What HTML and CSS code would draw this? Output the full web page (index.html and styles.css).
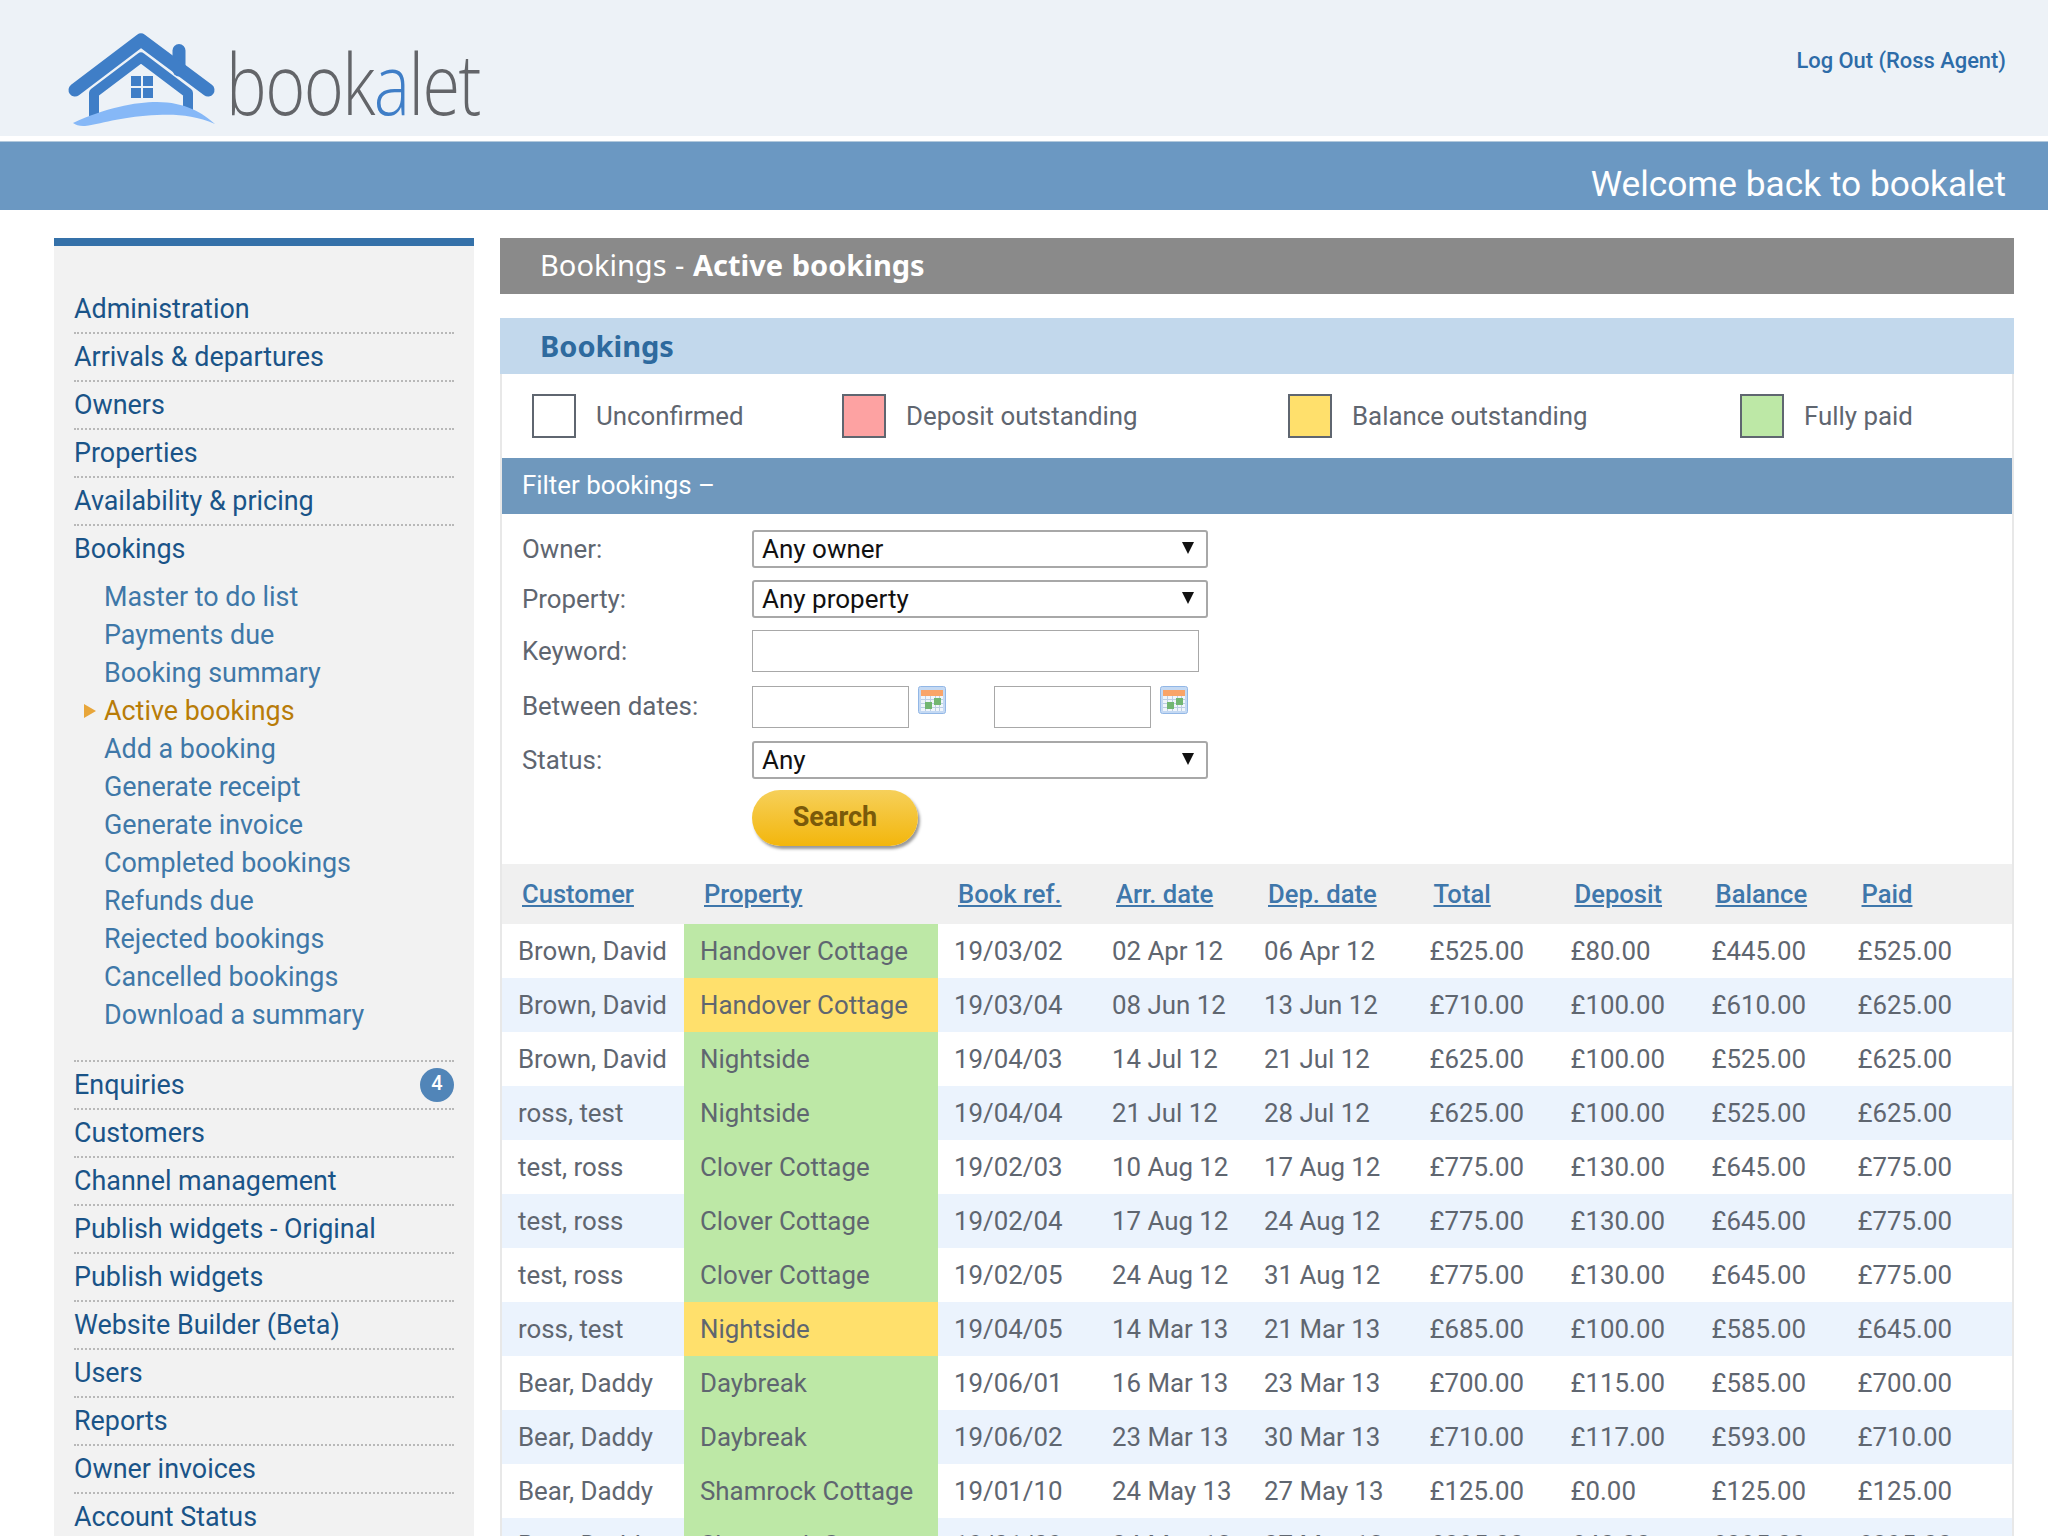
FILE: index.html
```html
<!DOCTYPE html>
<html lang="en">
<head>
<meta charset="utf-8">
<title>bookalet</title>
<link rel="stylesheet" href="styles.css">
</head>
<body>
<header class="top">
  <a class="logo" href="#">
    <svg class="logo-mark" viewBox="60 20 170 115" width="170" height="115" aria-hidden="true">
      <path d="M179 50.5 V70" fill="none" stroke="#3f7ec7" stroke-width="13" stroke-linecap="round"/>
      <path d="M75 90 L141 40 L208 90" fill="none" stroke="#3f7ec7" stroke-width="13" stroke-linecap="round" stroke-linejoin="round"/>
      <path d="M94 120 V93 L141 57.5 L188 93 V113" fill="none" stroke="#3f7ec7" stroke-width="10" stroke-linejoin="round"/>
      <path d="M131 76h10v10h-10zM143 76h10v10h-10zM131 88h10v10h-10zM143 88h10v10h-10z" fill="#3f7ec7"/>
      <path d="M73 123 C105 108 135 102 157 102 C185 102 203 113 215 124 C195 115 175 114 157 115 C125 116 105 123 85 126 C80 126.500 76 125 73 123 Z" fill="#86b8f7"/>
    </svg>
    <span class="logo-text">book<span class="logo-a">a</span>let</span>
  </a>
  <a class="logout" href="#">Log Out (Ross Agent)</a>
</header>
<div class="welcome">Welcome back to bookalet</div>
<div class="layout">
  <nav class="side">
    <ul class="menu">
      <li><a href="#">Administration</a></li>
      <li><a href="#">Arrivals &amp; departures</a></li>
      <li><a href="#">Owners</a></li>
      <li><a href="#">Properties</a></li>
      <li><a href="#">Availability &amp; pricing</a></li>
      <li class="open"><a href="#">Bookings</a>
        <ul class="sub">
          <li><a href="#">Master to do list</a></li>
          <li><a href="#">Payments due</a></li>
          <li><a href="#">Booking summary</a></li>
          <li class="current"><a href="#">Active bookings</a></li>
          <li><a href="#">Add a booking</a></li>
          <li><a href="#">Generate receipt</a></li>
          <li><a href="#">Generate invoice</a></li>
          <li><a href="#">Completed bookings</a></li>
          <li><a href="#">Refunds due</a></li>
          <li><a href="#">Rejected bookings</a></li>
          <li><a href="#">Cancelled bookings</a></li>
          <li><a href="#">Download a summary</a></li>
        </ul>
      </li>
      <li><a href="#">Enquiries</a><span class="badge">4</span></li>
      <li><a href="#">Customers</a></li>
      <li><a href="#">Channel management</a></li>
      <li><a href="#">Publish widgets - Original</a></li>
      <li><a href="#">Publish widgets</a></li>
      <li><a href="#">Website Builder (Beta)</a></li>
      <li><a href="#">Users</a></li>
      <li><a href="#">Reports</a></li>
      <li><a href="#">Owner invoices</a></li>
      <li><a href="#">Account Status</a></li>
    </ul>
  </nav>
  <main class="main">
    <h1 class="title">Bookings - <strong>Active bookings</strong></h1>
    <section class="panel">
      <h2 class="panel-head">Bookings</h2>
      <div class="legend">
        <div class="key k1"><i class="swatch"></i>Unconfirmed</div>
        <div class="key k2"><i class="swatch pink"></i>Deposit outstanding</div>
        <div class="key k3"><i class="swatch yellow"></i>Balance outstanding</div>
        <div class="key k4"><i class="swatch green"></i>Fully paid</div>
      </div>
      <div class="filter-head">Filter bookings &ndash;</div>
      <form class="filter">
        <div class="row r-sel"><label>Owner:</label><div class="sel">Any owner<i></i></div></div>
        <div class="row r-sel"><label>Property:</label><div class="sel">Any property<i></i></div></div>
        <div class="row r-key"><label>Keyword:</label><div class="inp wide"></div></div>
        <div class="row r-date"><label>Between dates:</label>
          <div class="inp date"></div>
          <svg class="cal" viewBox="0 0 28 28" width="28" height="28" aria-hidden="true"><rect x="0.5" y="0.5" width="27" height="27" rx="2" fill="#c4d9f3" stroke="#92b7e6"/><rect x="3" y="10" width="22" height="15" fill="#f0f5fb"/><path d="M3 13.500h22M3 17.500h22M3 21.500h22M7.500 10v15M12.500 10v15M17.500 10v15M21.500 10v15" stroke="#bccee3" fill="none"/><rect x="3" y="4" width="22" height="6" fill="#f9a468"/><rect x="7" y="16" width="7" height="7" fill="#72b672"/><rect x="16" y="12" width="7" height="7" fill="#72b672"/></svg>
          <div class="inp date second"></div>
          <svg class="cal" viewBox="0 0 28 28" width="28" height="28" aria-hidden="true"><rect x="0.5" y="0.5" width="27" height="27" rx="2" fill="#c4d9f3" stroke="#92b7e6"/><rect x="3" y="10" width="22" height="15" fill="#f0f5fb"/><path d="M3 13.500h22M3 17.500h22M3 21.500h22M7.500 10v15M12.500 10v15M17.500 10v15M21.500 10v15" stroke="#bccee3" fill="none"/><rect x="3" y="4" width="22" height="6" fill="#f9a468"/><rect x="7" y="16" width="7" height="7" fill="#72b672"/><rect x="16" y="12" width="7" height="7" fill="#72b672"/></svg>
        </div>
        <div class="row r-sel r-status"><label>Status:</label><div class="sel">Any<i></i></div></div>
        <div class="row r-btn"><label></label><button type="button" class="search">Search</button></div>
      </form>
      <table class="grid">
        <colgroup><col class="c1"><col class="c2"><col class="c3"><col class="c4"><col class="c5"><col class="c6"><col class="c7"><col class="c8"><col class="c9"></colgroup>
        <thead><tr><th><a href="#">Customer</a></th><th><a href="#">Property</a></th><th><a href="#">Book ref.</a></th><th><a href="#">Arr. date</a></th><th><a href="#">Dep. date</a></th><th><a href="#">Total</a></th><th><a href="#">Deposit</a></th><th><a href="#">Balance</a></th><th><a href="#">Paid</a></th></tr></thead>
        <tbody>
          <tr><td>Brown, David</td><td class="g">Handover Cottage</td><td>19/03/02</td><td>02 Apr 12</td><td>06 Apr 12</td><td>£525.00</td><td>£80.00</td><td>£445.00</td><td>£525.00</td></tr>
          <tr><td>Brown, David</td><td class="y">Handover Cottage</td><td>19/03/04</td><td>08 Jun 12</td><td>13 Jun 12</td><td>£710.00</td><td>£100.00</td><td>£610.00</td><td>£625.00</td></tr>
          <tr><td>Brown, David</td><td class="g">Nightside</td><td>19/04/03</td><td>14 Jul 12</td><td>21 Jul 12</td><td>£625.00</td><td>£100.00</td><td>£525.00</td><td>£625.00</td></tr>
          <tr><td>ross, test</td><td class="g">Nightside</td><td>19/04/04</td><td>21 Jul 12</td><td>28 Jul 12</td><td>£625.00</td><td>£100.00</td><td>£525.00</td><td>£625.00</td></tr>
          <tr><td>test, ross</td><td class="g">Clover Cottage</td><td>19/02/03</td><td>10 Aug 12</td><td>17 Aug 12</td><td>£775.00</td><td>£130.00</td><td>£645.00</td><td>£775.00</td></tr>
          <tr><td>test, ross</td><td class="g">Clover Cottage</td><td>19/02/04</td><td>17 Aug 12</td><td>24 Aug 12</td><td>£775.00</td><td>£130.00</td><td>£645.00</td><td>£775.00</td></tr>
          <tr><td>test, ross</td><td class="g">Clover Cottage</td><td>19/02/05</td><td>24 Aug 12</td><td>31 Aug 12</td><td>£775.00</td><td>£130.00</td><td>£645.00</td><td>£775.00</td></tr>
          <tr><td>ross, test</td><td class="y">Nightside</td><td>19/04/05</td><td>14 Mar 13</td><td>21 Mar 13</td><td>£685.00</td><td>£100.00</td><td>£585.00</td><td>£645.00</td></tr>
          <tr><td>Bear, Daddy</td><td class="g">Daybreak</td><td>19/06/01</td><td>16 Mar 13</td><td>23 Mar 13</td><td>£700.00</td><td>£115.00</td><td>£585.00</td><td>£700.00</td></tr>
          <tr><td>Bear, Daddy</td><td class="g">Daybreak</td><td>19/06/02</td><td>23 Mar 13</td><td>30 Mar 13</td><td>£710.00</td><td>£117.00</td><td>£593.00</td><td>£710.00</td></tr>
          <tr><td>Bear, Daddy</td><td class="g">Shamrock Cottage</td><td>19/01/10</td><td>24 May 13</td><td>27 May 13</td><td>£125.00</td><td>£0.00</td><td>£125.00</td><td>£125.00</td></tr>
          <tr><td>Bear, Daddy</td><td class="g">Shamrock Cottage</td><td>19/01/09</td><td>24 May 13</td><td>27 May 13</td><td>£295.00</td><td>£40.00</td><td>£295.00</td><td>£295.00</td></tr>
        </tbody>
      </table>
    </section>
  </main>
</div>
</body>
</html>
```
FILE: styles.css
```css
* { box-sizing: border-box; }
html, body { margin: 0; height: 1536px; overflow: hidden; }
body { font-family: Roboto, "Liberation Sans", sans-serif; font-size: 25.85px; color: #5f6670; background: #fff; }
a { color: inherit; text-decoration: none; }
ul { list-style: none; margin: 0; padding: 0; }

.top { height: 136px; background: #edf2f7; display: flex; justify-content: space-between; align-items: flex-start; padding: 20px 42px 0 60px; }
.logo { display: flex; align-items: flex-start; }
.logo-mark { display: block; }
.logo-text { font-family: "Open Sans", sans-serif; font-weight: 300; font-size: 85px; line-height: 90px; letter-spacing: -2px; color: #636569; margin: 17px 0 0 -4px; transform: scaleX(.806); transform-origin: left top; }
.logo-a { color: #3f7ec7; }
.logout { color: #2d6ca8; font-size: 21.9px; font-weight: 500; margin-top: 28px; }

.welcome { height: 69px; margin-top: 5px; border-top: 1px solid #b3c9dc; background: #6b98c2; color: #fff; font-size: 35.3px; text-align: right; line-height: 85px; padding-right: 42px; }

.layout { display: flex; gap: 26px; padding: 28px 34px 0 54px; align-items: flex-start; }
.side { width: 420px; flex: none; background: #f2f2f2; border-top: 8px solid #3571a9; padding: 40px 20px 0; color: #1a5488; height: 1400px; }
.menu > li { border-bottom: 2px dotted #b8b8b8; height: 48px; line-height: 46px; font-size: 26.9px; position: relative; }
.menu > li.open { height: auto; padding-bottom: 26px; }
.sub { padding: 6px 0 0 30px; color: #3f78a8; }
.sub li { height: 38px; line-height: 38px; position: relative; }
.sub li.current { color: #b87c08; }
.sub li.current::before { content: ""; position: absolute; left: -20px; top: 12px; border-left: 12px solid #e8a63a; border-top: 7px solid transparent; border-bottom: 7px solid transparent; }
.badge { position: absolute; right: 0; top: 6px; width: 34px; height: 34px; border-radius: 50%; background: #5185b8; color: #fff; font-size: 20px; font-weight: 500; line-height: 31px; text-align: center; }

.main { flex: 1; min-width: 0; }
.title { margin: 0; height: 56px; background: #8a8a8a; color: #fff; font-family: "Noto Sans", sans-serif; font-size: 29px; font-weight: 400; line-height: 54px; padding-left: 40px; word-spacing: 1px; }
.title strong { font-weight: 700; }
.panel { margin-top: 24px; border-left: 2px solid #e8e8e8; border-right: 2px solid #e8e8e8; }
.panel-head { margin: 0 -2px; height: 56px; background: #c2d8ec; color: #2e6a9e; font-family: "Noto Sans", sans-serif; font-size: 29px; font-weight: 700; line-height: 56px; padding-left: 40px; }
.legend { height: 84px; position: relative; }
.key { display: flex; align-items: center; position: absolute; top: 20px; line-height: 43px; }
.k1 { left: 30px; } .k2 { left: 340px; } .k3 { left: 786px; } .k4 { left: 1238px; }
.swatch { display: block; width: 44px; height: 44px; border: 2px solid #5f6670; margin-right: 20px; background: #fff; }
.pink { background: #fda2a2; } .yellow { background: #ffe06c; } .green { background: #bde8a6; }
.filter-head { height: 56px; background: #6f98bd; color: #fff; line-height: 54px; padding-left: 20px; }
.filter { padding: 16px 20px 0; height: 350px; }
.row { display: flex; align-items: flex-start; }
.row label { width: 230px; flex: none; line-height: 38px; }
.r-sel { height: 50px; }
.sel { width: 456px; height: 38px; border: 2px solid #a8a8a8; border-radius: 3px; color: #111; font-size: 26px; line-height: 34px; padding-left: 8px; position: relative; }
.sel i { position: absolute; right: 12px; top: 10px; border-top: 12px solid #111; border-left: 6px solid transparent; border-right: 6px solid transparent; }
.inp { border: 1px solid #a8a8a8; height: 42px; background: #fff; }
.wide { width: 447px; }
.r-key { height: 56px; }
.r-key label { line-height: 42px; }
.r-date { height: 55px; }
.r-date label { line-height: 40px; }
.date { width: 157px; }
.second { margin-left: 48px; }
.cal { margin: 0 0 0 9px; }
.r-status { height: 49px; }
.search { width: 166px; height: 56px; border: 0; border-radius: 28px; background: linear-gradient(#f6d05a, #f3b60c); box-shadow: 2px 3px 3px #999; color: #7a5a0a; font: 700 27px Roboto, sans-serif; padding: 0 0 2px; }
.r-btn { height: 66px; }

.grid { width: 100%; border-collapse: collapse; table-layout: fixed; }
.c1 { width: 182px; } .c2 { width: 254px; } .c3 { width: 158px; } .c4 { width: 152px; } .c5 { width: 165.5px; } .c6 { width: 141px; } .c7 { width: 141px; } .c8 { width: 146px; } .c9 { width: auto; }
.grid th { height: 60px; background: #f0f0f0; text-align: left; font-weight: 500; font-size: 25.6px; padding: 0 0 0 20px; color: #3f77ab; }
.grid th a { text-decoration: underline; }
.grid td { height: 54px; padding: 0 0 0 16px; white-space: nowrap; }
.grid tbody tr:nth-child(even) td { background: #ebf3fd; }
.grid tbody tr td.g { background: #bde8a6; }
.grid tbody tr td.y { background: #ffe06c; }
```
